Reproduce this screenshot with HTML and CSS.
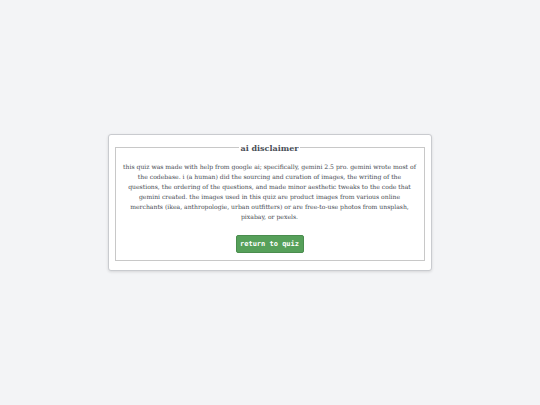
FILE: index.html
```html
<!DOCTYPE html>
<html>
<head>
<meta charset="utf-8">
<link rel="stylesheet" href="styles.css">
</head>
<body>
<div class="page">
  <div class="card">
    <fieldset class="box">
      <legend class="title">ai disclaimer</legend>
      <p class="text">this quiz was made with help from google ai; specifically, gemini 2.5 pro. gemini wrote most of the codebase. i (a human) did the sourcing and curation of images, the writing of the questions, the ordering of the questions, and made minor aesthetic tweaks to the code that gemini created. the images used in this quiz are product images from various online merchants (ikea, anthropologie, urban outfitters) or are free-to-use photos from unsplash, pixabay, or pexels.</p>
      <div class="actions"><button class="btn">return to quiz</button></div>
    </fieldset>
  </div>
</div>
</body>
</html>
```
FILE: styles.css
```css
html, body { margin: 0; padding: 0; }
body { background: #f3f4f6; font-family: "DejaVu Serif", serif; }
.page { width: 540px; height: 405px; display: flex; align-items: center; justify-content: center; }
.card {
  width: 324px; box-sizing: border-box; background: #fff;
  border: 1px solid #c9cbcf; border-radius: 3px;
  box-shadow: 0 1px 3px rgba(0,0,0,0.12);
  padding: 8px 6px 9px 6px;
  margin-left: -1px;
  margin-top: -1px;
}
.box { margin: 0; border: 1px solid #c8c8c8; padding: 9px 6px 7px 6px; }
.title { margin: 0 auto; padding: 0 1px; font-size: 8px; font-weight: bold; color: #4a4f57; }
.text { margin: 0; padding: 0 1px; font-size: 6.1px; line-height: 10px; text-align: center; color: #474c53; }
.actions { display: flex; justify-content: center; margin-top: 13px; }
.btn {
  font-family: "DejaVu Sans Mono", monospace; font-weight: bold; font-size: 7px;
  color: #fff; background: #56a05a; border: 1px solid #4a8d4e; border-radius: 2px;
  width: 68px; height: 18px; padding: 0; cursor: pointer;
}
```
